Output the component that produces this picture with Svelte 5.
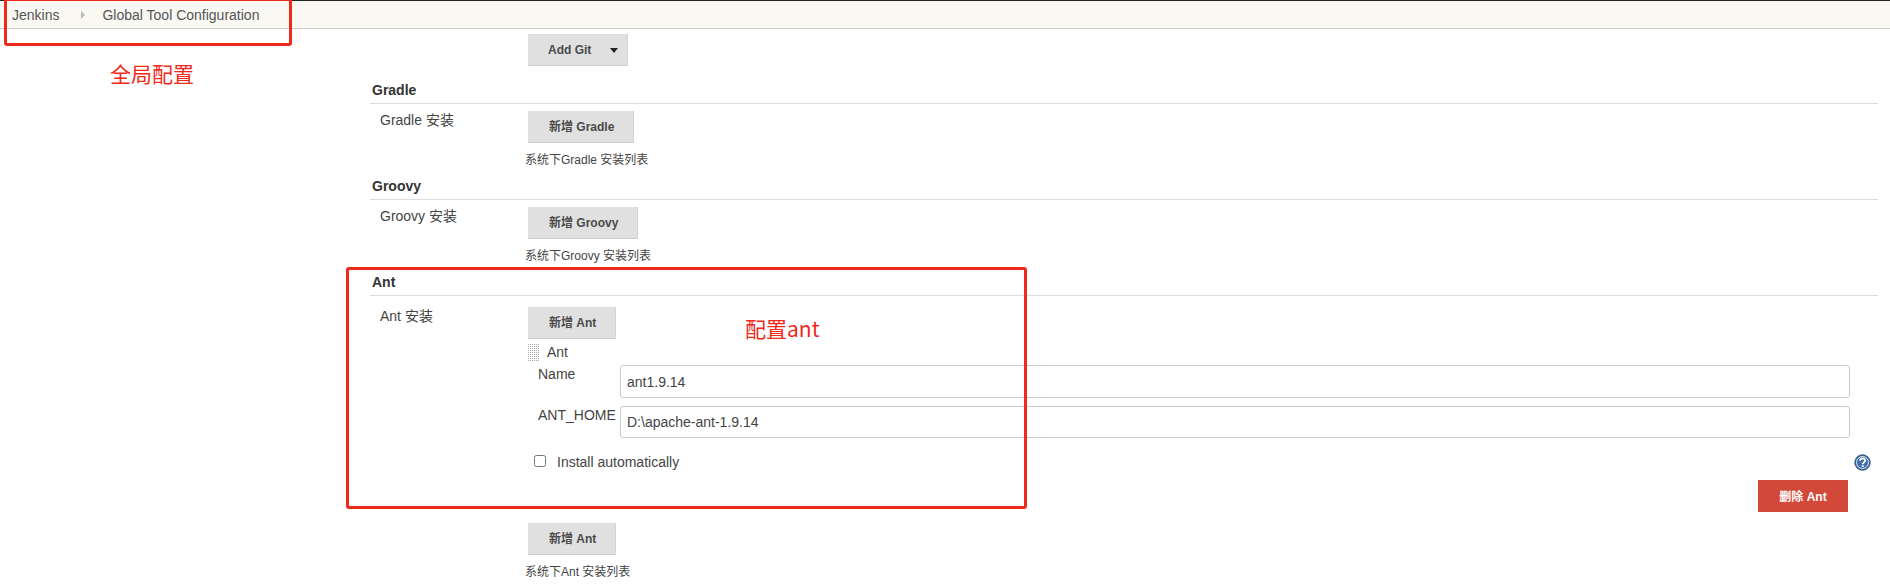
<script>
  const sections = [
    { id: 'gradle', name: 'Gradle' },
    { id: 'groovy', name: 'Groovy' }
  ];
</script>

<div class="page">
  <nav class="crumbs">
    <span>Jenkins</span>
    <svg class="sep" width="6" height="10" viewBox="0 0 6 10"><path d="M1 1l4 4-4 4z" fill="#bbb" /></svg>
    <span>Global Tool Configuration</span>
  </nav>

  <main class="main">
    <button class="btn git">Add Git <svg width="8" height="5" viewBox="0 0 8 5"><path d="M0 0h8L4 5z" fill="#222" /></svg></button>

    {#each sections as s}
      <section class="section">
        <h3>{s.name}</h3>
        <div class="row">
          <div class="label">{s.name} 安装</div>
          <div class="body">
            <button class="btn">新增 {s.name}</button>
            <p class="note">系统下{s.name} 安装列表</p>
          </div>
        </div>
      </section>
    {/each}

    <section class="section ant">
      <h3>Ant</h3>
      <div class="row">
        <div class="label">Ant 安装</div>
        <div class="body">
          <button class="btn">新增 Ant</button>
          <div class="item">
            <div class="item-head">
              <svg class="handle" width="12" height="17" viewBox="0 0 12 17">
                <defs>
                  <pattern id="dots" width="2" height="2" patternUnits="userSpaceOnUse">
                    <rect width="1" height="1" fill="#a8a8a8" />
                  </pattern>
                </defs>
                <rect width="12" height="17" fill="url(#dots)" />
              </svg>
              <span>Ant</span>
            </div>
            <div class="field">
              <span class="field-label">Name</span>
              <input type="text" value="ant1.9.14" />
            </div>
            <div class="field second">
              <span class="field-label">ANT_HOME</span>
              <input type="text" value="D:\apache-ant-1.9.14" />
            </div>
            <div class="auto">
              <label class="check"><input type="checkbox" /> <span>Install automatically</span></label>
              <svg class="help" width="17" height="17" viewBox="0 0 17 17">
                <circle cx="8.5" cy="8.5" r="7.7" fill="#3f6ea8" stroke="#2b4f80" />
                <circle cx="8.5" cy="8.5" r="6" fill="none" stroke="#dfe8f3" stroke-width="1" />
                <path d="M6.2 6.8c0-3.1 4.9-3.1 4.9-.2 0 1.9-2.4 1.9-2.4 3.7" fill="none" stroke="#fff" stroke-width="1.7" />
                <rect x="7.8" y="11.2" width="1.9" height="1.9" fill="#fff" />
              </svg>
            </div>
            <div class="remove"><button class="btn danger">删除 Ant</button></div>
          </div>
          <button class="btn">新增 Ant</button>
          <p class="note">系统下Ant 安装列表</p>
        </div>
      </div>
    </section>
  </main>

  <div class="box box-top"></div>
  <div class="box box-ant"></div>
  <div class="mark mark-top">全局配置</div>
  <div class="mark mark-ant">配置ant</div>
</div>

<style>
  :global(body) {
    margin: 0;
    background: #fff;
  }
  .page {
    position: relative;
    width: 1890px;
    height: 587px;
    overflow: hidden;
    font: 14px/20px "Liberation Sans", "Noto Sans CJK SC", sans-serif;
    color: #444;
  }
  .crumbs {
    box-sizing: border-box;
    height: 29px;
    display: flex;
    align-items: center;
    padding: 1px 0 0 12px;
    background: #f9f8f3;
    border-top: 1px solid #222;
    border-bottom: 1px solid #ccc;
    color: #555;
  }
  .sep {
    margin: 0 16px 0 21px;
  }
  .main {
    margin-left: 370px;
    margin-right: 12px;
    padding-top: 5px;
  }
  .btn {
    display: block;
    box-sizing: border-box;
    height: 32px;
    padding: 0 19px 2px 21px;
    border: 0;
    border-bottom: 1px solid #ccc;
    border-right: 1px solid #d4d4d4;
    background: #e0e0e0;
    color: #4a4a4a;
    font: bold 12px "Liberation Sans", "Noto Sans CJK SC", sans-serif;
  }
  .git {
    margin-left: 158px;
    width: 100px;
    padding: 0 0 0 20px;
    text-align: left;
  }
  .git svg {
    margin-left: 15px;
    vertical-align: 1px;
  }
  .section {
    margin-top: 14px;
  }
  .section + .section {
    margin-top: 8px;
  }
  h3 {
    margin: 0 0 7px;
    padding: 0 0 3px 2px;
    font-size: 14px;
    line-height: 20px;
    font-weight: bold;
    color: #333;
    border-bottom: 1px solid #ddd;
  }
  .ant h3 {
    margin-bottom: 11px;
  }
  .row {
    display: grid;
    grid-template-columns: 158px 1fr;
  }
  .label {
    padding-left: 10px;
    margin-top: -1px;
  }
  .note {
    margin: 9px 0 0 -3px;
    font-size: 12px;
    line-height: 16px;
  }
  .item {
    margin-top: 5px;
  }
  .item-head {
    display: flex;
    align-items: flex-start;
    gap: 7px;
    height: 21px;
  }
  .item-head span {
    line-height: 17px;
  }
  .field {
    display: grid;
    grid-template-columns: 82px 1fr;
    padding-left: 10px;
    margin-right: 28px;
  }
  .second {
    margin-top: 8px;
  }
  .field-label {
    line-height: 19px;
  }
  .field input {
    box-sizing: border-box;
    width: 100%;
    height: 33px;
    padding: 0 6px;
    border: 1px solid #ccc;
    border-radius: 3px;
    font: 14px "Liberation Sans", sans-serif;
    color: #444;
    outline: none;
  }
  .second input {
    height: 32px;
  }
  .auto {
    display: flex;
    align-items: center;
    justify-content: space-between;
    margin-top: 14px;
    height: 20px;
    padding: 0 7px 0 6px;
  }
  .check {
    display: flex;
    align-items: center;
    gap: 11px;
  }
  .check input {
    width: 12px;
    height: 12px;
    margin: -2px 0 0;
  }
  .help {
    display: block;
  }
  .remove {
    display: flex;
    justify-content: flex-end;
    margin: 8px 30px 11px 0;
  }
  .danger {
    width: 90px;
    padding: 0 0 2px;
    border: 0;
    background: #d24939;
    color: #fff;
  }
  .box {
    position: absolute;
    box-sizing: border-box;
    border: 3px solid #ee2a1b;
    border-radius: 3px;
  }
  .box-top {
    left: 4px;
    top: -2px;
    width: 288px;
    height: 48px;
  }
  .box-ant {
    left: 346px;
    top: 267px;
    width: 681px;
    height: 242px;
  }
  .mark {
    position: absolute;
    font: 21px/28px "Noto Sans CJK SC", sans-serif;
    color: #ee2a1b;
  }
  .mark-top {
    left: 110px;
    top: 59px;
  }
  .mark-ant {
    left: 745px;
    top: 314px;
  }
</style>
